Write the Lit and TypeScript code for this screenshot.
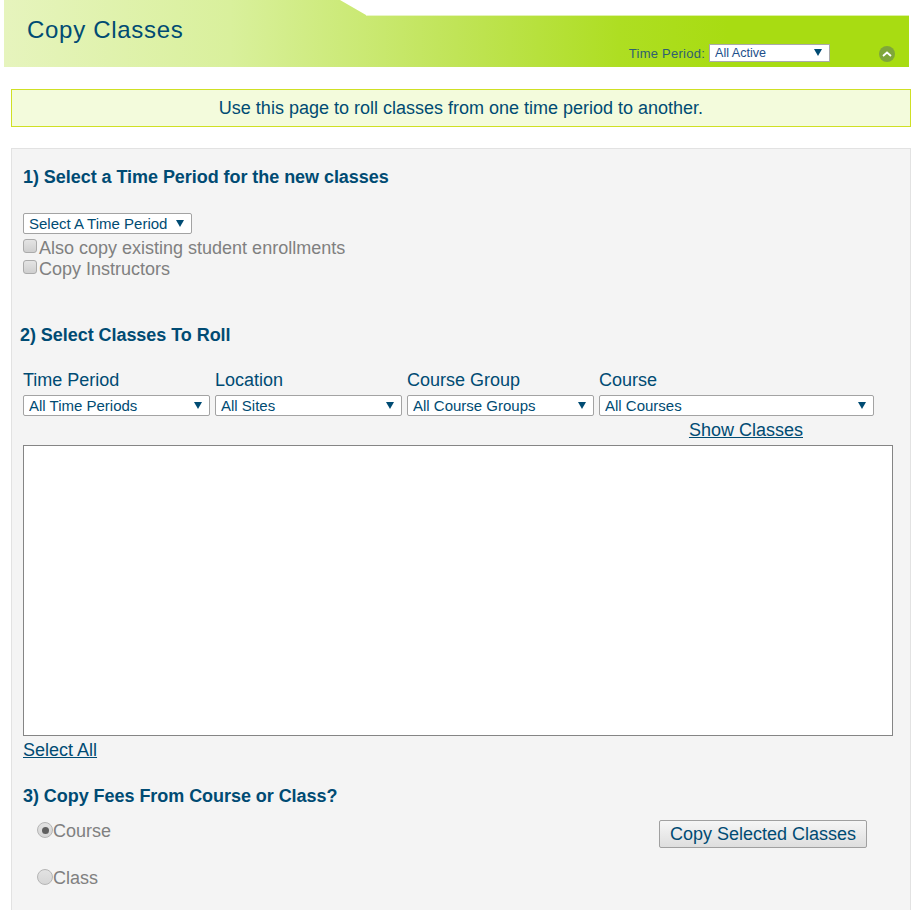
import { LitElement, html, css } from "lit";
import { customElement } from "lit/decorators.js";

@customElement("app-root")
export class AppRoot extends LitElement {
  static styles = css`
    :host {
      display: block;
      height: 910px;
      overflow: hidden;
      background: #fff;
      font-family: "Liberation Sans", Arial, sans-serif;
      color: #004b73;
    }
    * { box-sizing: border-box; }
    .header {
      margin-left: 4px;
      width: 905px;
      height: 67px;
      background:
        linear-gradient(rgba(255, 255, 255, 0.6), rgba(255, 255, 255, 0.6)) 362px 15px / 100% 1px no-repeat,
        linear-gradient(90deg, #e6f4bd 0%, #d9f09c 25%, #c0e457 50%, #aede22 68%, #a8dc12 80%, #a8dc12 100%);
      clip-path: polygon(0 0, 336px 0, 362px 15px, 100% 15px, 100% 100%, 0 100%);
      display: flex;
      align-items: flex-start;
      padding: 15px 14px 0 23px;
    }
    .title { font-size: 24px; line-height: 30px; letter-spacing: 0.7px; flex: 1; }
    .period { display: flex; align-items: center; gap: 4px; margin-top: 29px; font-size: 13px; color: #2f6070; letter-spacing: 0.25px; }
    .collapse { width: 16px; height: 16px; border-radius: 50%; background: #7fa63a; margin: 31px 0 0 49px; display: flex; align-items: center; justify-content: center; }
    .notice {
      margin: 22px 7px 0 11px;
      height: 38px;
      background: #f3fbdc;
      border: 1px solid #cfe024;
      display: flex; align-items: center; justify-content: center;
      font-size: 18px;
    }
    .panel {
      margin: 21px 7px 0 11px;
      height: 800px;
      background: #f4f4f4;
      border: 1px solid #e2e2e2;
      padding: 17px 11px 0 11px;
    }
    h2 { margin: 0; font-size: 18px; line-height: 22px; font-weight: bold; letter-spacing: -0.05px; }
    .s1 { height: 47px; }
    .sel { position: relative; display: block; }
    .sel select {
      appearance: none;
      display: block;
      width: 100%;
      height: 21px;
      background: #fff;
      border: 1px solid #a3a3a3;
      border-radius: 2px;
      padding: 0 0 0 5px;
      margin: 0;
      font: 15px "Liberation Sans", Arial, sans-serif;
      color: #004b73;
    }
    .sel::after {
      content: "";
      position: absolute;
      right: 8px;
      top: 7px;
      border-left: 4px solid transparent;
      border-right: 4px solid transparent;
      border-top: 7px solid #004b73;
    }
    .first { width: 169px; margin-bottom: 4px; }
    .top { width: 121px; }
    .top select { height: 18px; border-radius: 0; border-color: #aaa; font-size: 12.6px; color: #1d4f8a; }
    .top::after { right: 8px; top: 5px; }
    .check {
      display: flex; align-items: center;
      height: 21px;
      font-size: 18px;
      color: #808080;
    }
    input {
      appearance: none;
      margin: 0;
      flex: none;
      width: 14px; height: 14px;
      background: linear-gradient(#e4e4e4, #cfcfcf);
      border: 1px solid #ababab;
      position: relative;
    }
    input[type="checkbox"] { border-radius: 3px; margin: -5px 2px 0 0; }
    .h2 { margin: 44px 0 0 -3px; }
    .filters {
      display: grid;
      grid-template-columns: 187px 187px 187px 275px;
      column-gap: 5px;
      margin-top: 24px;
    }
    .filters label { display: block; font-size: 18px; line-height: 20px; margin-bottom: 5px; }
    .show-row { display: flex; justify-content: flex-end; padding-right: 96px; height: 29px; }
    a { color: #004b73; text-decoration: underline; font-size: 18px; line-height: 28px; }
    .listbox { height: 291px; width: 870px; background: #fff; border: 1px solid #858585; }
    .below { height: 36px; }
    .below a { display: block; }
    .h3 { margin-top: 13px; }
    .copy { display: flex; justify-content: space-between; width: 844px; margin-top: 11px; }
    .radios { padding: 3px 0 0 14px; }
    .radio { display: flex; height: 47px; font-size: 18px; color: #808080; align-items: flex-start; line-height: 21px; }
    input[type="radio"] { border-radius: 50%; margin: 1px 0 0 0; width: 16px; height: 16px; background: linear-gradient(#e2e2e2, #d6d6d6); border-color: #b5b5b5; }
    input[type="radio"]:checked::after {
      content: ""; position: absolute; left: 3.5px; top: 3.5px; width: 7px; height: 7px; border-radius: 50%; background: #5f5f5f;
    }
    button {
      width: 208px; height: 28px;
      margin-top: 2px;
      background: linear-gradient(#f6f6f6, #dedede);
      border: 1px solid #a0a0a0;
      border-radius: 2px;
      font: 18px "Liberation Sans", Arial, sans-serif;
      color: #004b73;
      padding: 0;
    }
  `;

  render() {
    const filters = [
      ["Time Period", "All Time Periods"],
      ["Location", "All Sites"],
      ["Course Group", "All Course Groups"],
      ["Course", "All Courses"],
    ];
    return html`
      <div class="header">
        <div class="title">Copy Classes</div>
        <div class="period">
          <span>Time Period:</span>
          <span class="sel top"><select><option>All Active</option></select></span>
        </div>
        <div class="collapse">
          <svg width="10" height="6" viewBox="0 0 10 6"><path d="M1 5 L5 1.5 L9 5" fill="none" stroke="#fff" stroke-width="1.8"/></svg>
        </div>
      </div>
      <div class="notice">Use this page to roll classes from one time period to another.</div>
      <div class="panel">
        <h2 class="s1">1) Select a Time Period for the new classes</h2>
        <span class="sel first"><select><option>Select A Time Period</option></select></span>
        <div class="check"><input type="checkbox" />Also copy existing student enrollments</div>
        <div class="check"><input type="checkbox" />Copy Instructors</div>
        <h2 class="h2">2) Select Classes To Roll</h2>
        <div class="filters">
          ${filters.map(
            ([label, value]) => html`<div>
              <label>${label}</label>
              <span class="sel"><select><option>${value}</option></select></span>
            </div>`
          )}
        </div>
        <div class="show-row"><a href="#">Show Classes</a></div>
        <div class="listbox" role="listbox"></div>
        <div class="below"><a href="#">Select All</a></div>
        <h2 class="h3">3) Copy Fees From Course or Class?</h2>
        <div class="copy">
          <div class="radios">
            <div class="radio"><input type="radio" name="fee" checked />Course</div>
            <div class="radio"><input type="radio" name="fee" />Class</div>
          </div>
          <button>Copy Selected Classes</button>
        </div>
      </div>
    `;
  }
}
